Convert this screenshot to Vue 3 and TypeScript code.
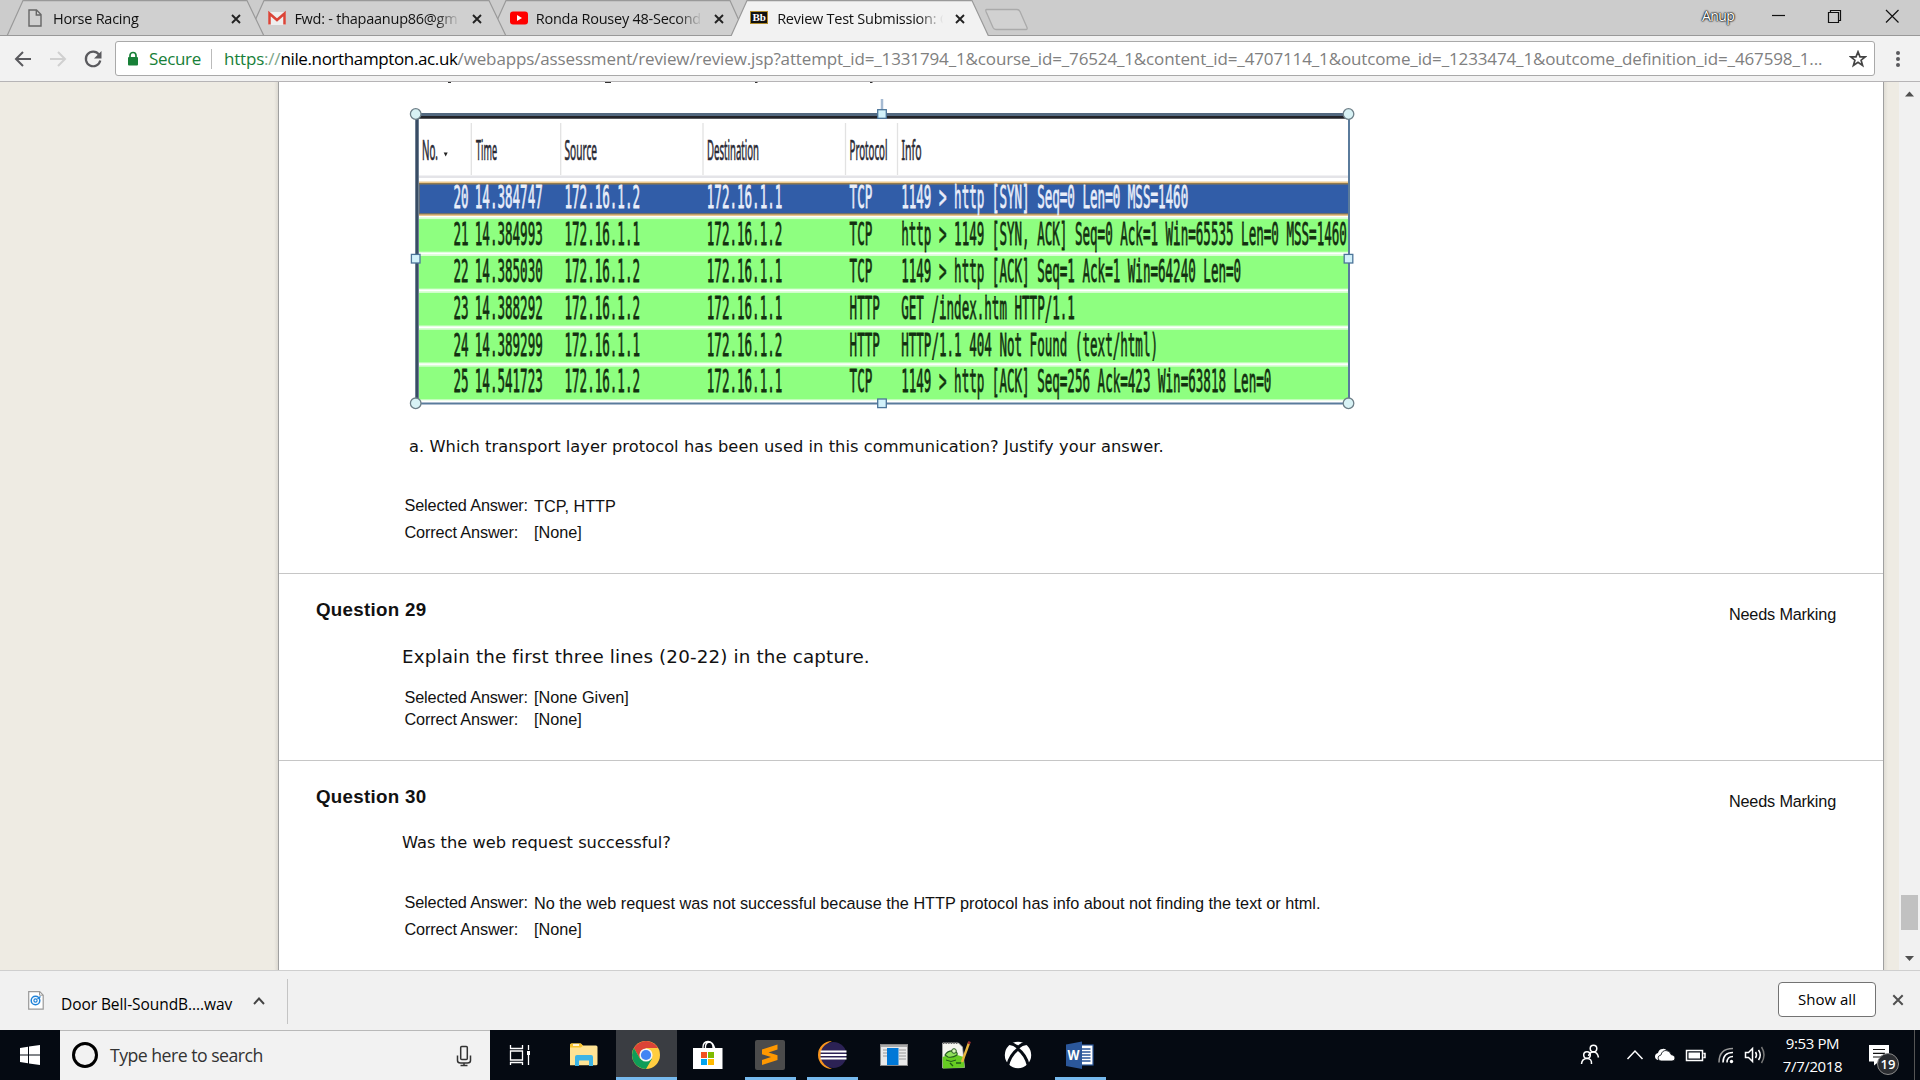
<script setup lang="ts">
interface Tab {
  id: string
  title: string
}

interface PacketRow {
  no: string
  time: string
  source: string
  destination: string
  protocol: string
  info: string
}

const tabs: Tab[] = [
  { id: 'page', title: 'Horse Racing' },
  { id: 'mail', title: 'Fwd: - thapaanup86@gm' },
  { id: 'video', title: 'Ronda Rousey 48-Second' },
  { id: 'review', title: 'Review Test Submission: C' },
]

const columns = [
  { label: 'No.', x: 422, width: 16 },
  { label: 'Time', x: 476, width: 21 },
  { label: 'Source', x: 564.5, width: 32.5 },
  { label: 'Destination', x: 707, width: 52 },
  { label: 'Protocol', x: 849.5, width: 38 },
  { label: 'Info', x: 901.5, width: 20 },
]

const packets: PacketRow[] = [
  { no: '20', time: '14.384747', source: '172.16.1.2', destination: '172.16.1.1', protocol: 'TCP', info: '1149 > http [SYN] Seq=0 Len=0 MSS=1460' },
  { no: '21', time: '14.384993', source: '172.16.1.1', destination: '172.16.1.2', protocol: 'TCP', info: 'http > 1149 [SYN, ACK] Seq=0 Ack=1 Win=65535 Len=0 MSS=1460' },
  { no: '22', time: '14.385030', source: '172.16.1.2', destination: '172.16.1.1', protocol: 'TCP', info: '1149 > http [ACK] Seq=1 Ack=1 Win=64240 Len=0' },
  { no: '23', time: '14.388292', source: '172.16.1.2', destination: '172.16.1.1', protocol: 'HTTP', info: 'GET /index.htm HTTP/1.1' },
  { no: '24', time: '14.389299', source: '172.16.1.1', destination: '172.16.1.2', protocol: 'HTTP', info: 'HTTP/1.1 404 Not Found (text/html)' },
  { no: '25', time: '14.541723', source: '172.16.1.2', destination: '172.16.1.1', protocol: 'TCP', info: '1149 > http [ACK] Seq=256 Ack=423 Win=63818 Len=0' },
]

const rowTop = (i: number): number => 181.8 + i * 36.9
const baseline = (i: number): number => 208.4 + i * 36.8

const cells = (row: PacketRow) => [
  { x: 453.5, text: row.no },
  { x: 474.8, text: row.time },
  { x: 564.5, text: row.source },
  { x: 706.8, text: row.destination },
  { x: 849.6, text: row.protocol },
  { x: 901.2, text: row.info },
]

const corners = [[415.7, 114], [1348.5, 114], [415.7, 403.3], [1348.5, 403.3]]
const sides = [[882, 114], [882, 403.3], [415.7, 258.7], [1348.5, 258.7]]
</script>

<template>
  <div class="screen">
    <header class="tabstrip">
      <svg class="tabshapes" width="1040" height="36" viewBox="0 0 1040 36">
        <g fill="#d0d0d0" stroke="#999" stroke-width="1.2">
          <path d="M490 36 L506 .6 H730 L746 36" />
          <path d="M248 36 L264 .6 H489 L506 36" />
          <path d="M7 36 L23 .6 H247 L264 36" />
        </g>
        <path d="M0 35.500H1040" stroke="#999" />
        <path d="M731 36 L747 .6 H972 L988.500 36" fill="#f2f2f2" stroke="#999" stroke-width="1.200" />
        <path d="M986.500 9.500H1017q2 0 3 2l7 16q.6 2-1 2H996q-2 0-3-2l-7-16q-.6-2 .5-2z" fill="#d1d1d1" stroke="#aaa" stroke-width="1.300" />
      </svg>
      <nav class="tabs">
        <div v-for="tab in tabs" :key="tab.id" class="tab">
          <span class="favicon">
            <svg v-if="tab.id === 'page'" width="20" height="20" viewBox="0 0 20 20">
              <path d="M3 2h7.500l4.500 4.500V18H3z M10.300 2v5h4.700" fill="none" stroke="#666" stroke-width="1.400" />
            </svg>
            <svg v-else-if="tab.id === 'mail'" width="20" height="20" viewBox="0 0 20 20">
              <path d="M1.500 4h17v13h-17z" fill="#eee" />
              <path d="M2.500 16.500V5.500L10 12l7.500-6.500v11" fill="none" stroke="#db4437" stroke-width="2.500" />
            </svg>
            <svg v-else-if="tab.id === 'video'" width="20" height="20" viewBox="0 0 20 20">
              <rect x="1" y="3.500" width="18" height="13" rx="3" fill="#f00" />
              <path d="M8 7l5 3-5 3z" fill="#fff" />
            </svg>
            <span v-else class="bb">Bb</span>
          </span>
          <span class="tab-title">{{ tab.title }}</span>
          <svg class="tab-close" width="12" height="12" viewBox="0 0 12 12">
            <path d="M2 2l8 8M10 2l-8 8" stroke="#222" stroke-width="1.900" />
          </svg>
        </div>
      </nav>
      <div class="window-controls">
        <span class="profile">Anup</span>
        <svg width="130" height="34" viewBox="0 0 130 34" fill="none" stroke="#111" stroke-width="1.200">
          <path d="M1 15.500h13" />
          <path d="M57.500 12.500h10v10h-10z M59.500 12.500v-2h10v10h-2" />
          <path d="M115 10l12.500 12.500M127.500 10L115 22.500" />
        </svg>
      </div>
    </header>

    <div class="toolbar">
      <svg class="nav-icons" width="115" height="45" viewBox="0 36 115 45" fill="none">
        <path d="M31 59H16M23 52l-7 7 7 7" stroke="#5a5a5e" stroke-width="2" />
        <path d="M50 59h15M58 52l7 7-7 7" stroke="#d0d0d0" stroke-width="2" />
        <path d="M99 54.500a7.300 7.300 0 1 0 1.300 6" stroke="#5a5a5e" stroke-width="2.200" />
        <path d="M101.500 51v7.500H94z" fill="#5a5a5e" />
      </svg>
      <div class="omnibox">
        <svg class="lock" width="12" height="16" viewBox="0 0 12 16">
          <path d="M3 7V4.500a3 3 0 0 1 6 0V7" fill="none" stroke="#188038" stroke-width="1.700" />
          <rect x="1" y="6" width="10" height="8.500" rx="1" fill="#188038" />
        </svg>
        <span class="secure">Secure</span>
        <span class="separator"></span>
        <span class="url"><span class="scheme">https</span><span class="slashes">://</span><span class="host">nile.northampton.ac.uk</span><span class="path">/webapps/assessment/review/review.jsp?attempt_id=_1331794_1&amp;course_id=_76524_1&amp;content_id=_4707114_1&amp;outcome_id=_1233474_1&amp;outcome_definition_id=_467598_1...</span></span>
        <svg class="star" width="18" height="18" viewBox="0 0 18 18">
          <path d="M9 1.800l2 5h5.200l-4.100 3.400 1.500 5.300L9 12.400l-4.600 3.100 1.500-5.300L1.800 6.800H7z" fill="none" stroke="#444" stroke-width="1.700" />
        </svg>
      </div>
      <svg class="menu" width="6" height="18" viewBox="0 0 6 18" fill="#5a5a5e">
        <circle cx="3" cy="3" r="2" /><circle cx="3" cy="9" r="2" /><circle cx="3" cy="15" r="2" />
      </svg>
    </div>

    <main class="viewport">
      <div class="gutter"></div>
      <div class="card">
        <section class="question q28">
          <svg class="capture" width="1100" height="330" viewBox="279 82 1100 330">
            <path d="M448 82.500h3M605 82.500h6M755 82.500h2.500M870 82.500h2.500" stroke="#333" />
            <rect x="416" y="114" width="932.500" height="289" fill="#fff" />
            <rect x="418" y="175.500" width="930" height="2.500" fill="#e4e4e8" />
            <path d="M471.300 123v52M560.700 123v52M703 123v52M845.500 123v52M897.500 123v52" stroke="#e2e2e2" stroke-width="1.300" />
            <g class="capture-head">
              <text v-for="c in columns" :key="c.label" :x="c.x" y="160.200" :textLength="c.width" lengthAdjust="spacingAndGlyphs">{{ c.label }}</text>
            </g>
            <path d="M443.700 152.500h4l-2 4z" fill="#222" />
            <g v-for="(row, i) in packets" :key="row.no">
              <template v-if="i === 0">
                <rect x="418" y="181.500" width="930.500" height="34.500" fill="#ecc88e" />
                <rect x="418" y="183" width="930.500" height="31.500" fill="#8f7a50" />
                <rect x="419.500" y="184.500" width="929" height="28.800" fill="#315da8" />
              </template>
              <template v-else>
                <rect x="418" :y="rowTop(i) - 1.400" width="930.500" height="35.500" fill="#d9ffd4" />
                <rect x="418" :y="rowTop(i) + .4" width="930.500" height="32.600" fill="#8eff80" />
              </template>
              <g class="capture-data" :class="{ selected: i === 0 }">
                <text v-for="cell in cells(row)" :key="cell.x" :transform="`translate(${cell.x} ${baseline(i)}) scale(.3922 1)`">{{ cell.text }}</text>
              </g>
            </g>
            <path d="M417 112v291" stroke="#6e7f92" stroke-width="4" />
            <path d="M417 114v289" stroke="#334860" stroke-width="1.800" />
            <path d="M416 114.500H1349" stroke="#52687f" stroke-width="3" />
            <path d="M418 117.300H1348" stroke="#222328" stroke-width="2.800" />
            <path d="M1349 114V403.500H416" fill="none" stroke="#5a7b9c" stroke-width="2" />
            <path d="M882 99v12" stroke="#a5bad2" stroke-width="2.500" />
            <circle v-for="p in corners" :key="`c${p}`" :cx="p[0]" :cy="p[1]" r="5.300" fill="#d8f2f5" stroke="#6d7f88" stroke-width="1.300" />
            <rect v-for="p in sides" :key="`s${p}`" :x="p[0] - 4.300" :y="p[1] - 4.300" width="8.600" height="8.600" fill="#d2f1fa" stroke="#4c7499" stroke-width="1.300" />
          </svg>
          <p class="prompt listed">a. Which transport layer protocol has been used in this communication? Justify your answer.</p>
          <div class="answer first"><span class="label">Selected Answer:</span><span class="value lowered">TCP, HTTP</span></div>
          <div class="answer spaced"><span class="label">Correct Answer:</span><span class="value">[None]</span></div>
        </section>
        <section class="question q29">
          <div class="heading"><h3>Question 29</h3><span class="status">Needs Marking</span></div>
          <p class="prompt large">Explain the first three lines (20-22) in the capture.</p>
          <div class="answer first"><span class="label">Selected Answer:</span><span class="value">[None Given]</span></div>
          <div class="answer"><span class="label">Correct Answer:</span><span class="value">[None]</span></div>
        </section>
        <section class="question q30">
          <div class="heading"><h3>Question 30</h3><span class="status">Needs Marking</span></div>
          <p class="prompt">Was the web request successful?</p>
          <div class="answer first"><span class="label">Selected Answer:</span><span class="value lowered">No the web request was not successful because the HTTP protocol has info about not finding the text or html.</span></div>
          <div class="answer spaced"><span class="label">Correct Answer:</span><span class="value">[None]</span></div>
        </section>
      </div>
      <div class="gutter-right"></div>
      <div class="scrollbar">
        <svg width="21" height="22" viewBox="0 0 21 22"><path d="M6 14.500l4.500-5 4.500 5z" fill="#505050" /></svg>
        <div class="thumb"></div>
        <svg width="21" height="22" viewBox="0 0 21 22"><path d="M6 9l4.500 5L15 9z" fill="#505050" /></svg>
      </div>
    </main>

    <div class="downloads">
      <svg class="file-icon" width="16" height="19" viewBox="0 0 16 19">
        <path d="M.700.700h11l3.500 3.500v14H.700z" fill="#fff" stroke="#999" stroke-width="1.200" />
        <path d="M11.500.700v3.500h3.500" fill="none" stroke="#999" />
        <circle cx="7.500" cy="9.500" r="4.300" fill="none" stroke="#1f82d8" stroke-width="1.500" />
        <circle cx="7.500" cy="9.500" r="1.600" fill="none" stroke="#1f82d8" stroke-width="1.200" />
        <path d="M9.500 8l3-2.500" stroke="#1f82d8" stroke-width="1.300" />
      </svg>
      <span class="filename">Door Bell-SoundB....wav</span>
      <svg class="chevron" width="14" height="10" viewBox="0 0 14 10"><path d="M2 8l5-5.500L12 8" fill="none" stroke="#444" stroke-width="1.900" /></svg>
      <span class="divider"></span>
      <button class="show-all">Show all</button>
      <svg class="close-bar" width="12" height="12" viewBox="0 0 12 12"><path d="M1.300 1.300l9.400 9.400M10.700 1.300l-9.400 9.400" stroke="#505050" stroke-width="2" /></svg>
    </div>

    <footer class="taskbar">
      <div class="start">
        <svg width="20" height="20" viewBox="0 0 20 20" fill="#fff"><path d="M0 3l8-1.200v7.700H0z M9 1.600L20 0v9.500H9z M0 10.500h8v7.700L0 17z M9 10.500h11V20L9 18.400z" /></svg>
      </div>
      <div class="search">
        <span class="cortana"></span>
        <span class="placeholder">Type here to search</span>
        <svg class="mic" width="16" height="22" viewBox="0 0 16 22" fill="none" stroke="#333" stroke-width="1.500">
          <rect x="4.700" y="1.500" width="6.600" height="13" rx="1" /><path d="M1.500 10.500v5q0 2.500 3 2.500h7q3 0 3-2.500v-5M8 18v2.500M4.500 20.500h7" />
        </svg>
      </div>
      <svg class="apps" width="626" height="50" viewBox="490 1030 626 50">
        <g stroke="#fff" stroke-width="1.300" fill="none">
          <path d="M510.500 1045v3.500h12V1045 M510.500 1051h12v9h-12z M510.500 1065v-2.500h12v2.500 M528.500 1045v5M528.500 1055v10" /><path d="M528.500 1051v4" stroke-width="3" />
        </g>
        <path d="M570 1045q0-1.500 1.500-1.500h9l2.500 2h13q1.500 0 1.500 1.500v17q0 1.300-1.500 1.300h-26z" fill="#ffe394" />
        <path d="M570 1045q0-1.500 1.500-1.500h9.500l2 2.200-2 1.800h-11z" fill="#f8c32c" /><path d="M573 1045h6" stroke="#fff" stroke-width="1.600" />
        <path d="M575 1066v-9q0-2 2-2h14q2 0 2 2v9h-4v-5.500h-10v5.500z" fill="#3cb4e6" />
        <rect x="616" y="1030" width="61" height="50" fill="#3a3d42" />
        <circle cx="646" cy="1055" r="14" fill="#ffcd40" />
        <path d="M633.900 1048A14 14 0 0 1 658.100 1048H646L639.900 1058.500z" fill="#db4437" />
        <path d="M633.900 1048A14 14 0 0 0 646 1069l6.100-10.500h-12.200z" fill="#0f9d58" />
        <circle cx="646" cy="1055" r="6.600" fill="#f5f5f5" /><circle cx="646" cy="1055" r="5.100" fill="#4285f4" />
        <path d="M703 1049v-2q0-5 5-5.500 5 .5 5 5.500v2 M705.500 1049v-3q.5-3.500 3.500-4 4 0 6 7" fill="none" stroke="#fff" stroke-width="1.300" />
        <path d="M693 1048h29.500v21H693z" fill="#fff" />
        <path d="M701 1052h6v6h-6z" fill="#f25022" /><path d="M708 1052h6v6h-6z" fill="#7fba00" /><path d="M701 1059h6v6h-6z" fill="#00a4ef" /><path d="M708 1059h6v6h-6z" fill="#ffb900" />
        <rect x="755" y="1040" width="30" height="30" rx="2" fill="#4b4b4b" />
        <path d="M762 1049.500l15.500-5v5l-9 3 9 2.700v4.800l-15.500 5v-5l9-3-9-2.700z" fill="#ff9800" />
        <path d="M832 1041a14 14 0 0 0 0 28 15 15 0 0 1 0-28z" fill="#f7941e" />
        <circle cx="833.500" cy="1055" r="13" fill="#2c2255" />
        <path d="M820.500 1051.500h26M820.500 1055h26M820.500 1058.500h26" stroke="#fff" stroke-width="1.900" />
        <rect x="880.500" y="1044.500" width="27" height="21" fill="#e9e9e9" stroke="#888" /><path d="M881 1046h26" stroke="#a8a8a8" stroke-width="2" />
        <path d="M883 1050h4M883 1053h4M883 1056h4M899 1050h7M899 1053h7M899 1056h7M899 1059h7" stroke="#999" stroke-width="1.200" /><rect x="887" y="1048" width="11.500" height="17" fill="#0078d7" />
        <path d="M942.500 1043h16l4 4 2 20.500-22 .5z" fill="#f4f4ee" stroke="#aaa" stroke-width=".8" /><path d="M942.500 1057q10-5 21 0l1 10.500-21.500 1z" fill="#66cc22" />
        <path d="M943 1043h15" stroke="#666" stroke-width="2" stroke-dasharray="1.300 1.300" />
        <path d="M945 1055q3-5 9-4 4 1 3 4-4 3-9 2z" fill="#8fe05a" stroke="#245b1e" stroke-width="1.100" /><circle cx="954" cy="1051" r="2.300" fill="#d9f5b8" stroke="#245b1e" /><path d="M946 1060q5 3 10 0" fill="none" stroke="#245b1e" />
        <path d="M950 1063l3 3M956 1063h5" stroke="#205a18" stroke-width="1.300" />
        <path d="M969 1043l-7 19" stroke="#e7b53c" stroke-width="2.400" /><path d="M969.700 1041.500l-1 2.500" stroke="#9c3131" stroke-width="2.600" />
        <circle cx="1018" cy="1055" r="13.200" fill="#fff" />
        <path d="M1008.500 1043.500q5-.5 9.500 4 4.500-4.500 9.500-4M1018 1049q-8 6-10.500 17M1018 1049q8 6 10.500 17" fill="none" stroke="#060b13" stroke-width="3" />
        <rect x="1079" y="1045" width="14" height="20" fill="#fff" stroke="#2b579a" stroke-width="1.200" />
        <path d="M1081 1049h9.500M1081 1052h9.500M1081 1055h9.500M1081 1058h9.500M1081 1061h9.500" stroke="#2b579a" stroke-width="1.300" />
        <path d="M1066 1044.500l16-3v27.500l-16-3z" fill="#2b579a" />
        <text x="1067.500" y="1060" class="word-mark" textLength="12" lengthAdjust="spacingAndGlyphs">W</text>
        <path d="M616 1078.500h61M745 1078.500h51M807 1078.500h51M1055 1078.500h51" stroke="#76b9ed" stroke-width="3" />
      </svg>
      <svg class="tray" width="200" height="50" viewBox="1575 1030 200 50" fill="none" stroke="#fff" stroke-width="1.500">
        <circle cx="1593.500" cy="1048.500" r="3.300" /><path d="M1588.500 1056q1-4 5-4t5 5.500" /><circle cx="1587" cy="1055" r="3.300" /><path d="M1581.500 1064q.5-5.500 5.500-5.500t4.500 5.500" />
        <path d="M1627.500 1059l7.500-8 7.500 8" />
        <path d="M1659 1060h-1q-3-1-3-3.500 0-3 3-3.500 1-4 4.500-4 2-1 4.500 1.500z" fill="#fff" stroke="none" /><path d="M1661 1061q-3-.5-3-3t3-3q1-4.500 5-4.500 4 0 5 4 4 .500 4 3.500 0 3-3 3z" fill="#fff" stroke="#050a12" stroke-width=".8" />
        <path d="M1686.500 1050.500h16v10h-16z M1703.500 1053.500h1.500v4h-1.500" /><path d="M1688.500 1052.500h11.500v6h-11.500z" fill="#fff" stroke="none" />
        <path d="M1719 1062.500q0-14 14-14" stroke="#999" /><path d="M1723 1062.500q0-10 10-10M1727 1062.500q0-6 6-6" /><circle cx="1731.500" cy="1061.500" r="1.700" fill="#fff" stroke="none" />
        <path d="M1745.500 1052.500h3l4-4v13l-4-4h-3z" /><path d="M1755.500 1052q2 3 0 6M1758.500 1050q3.500 5 0 10" /><path d="M1761.500 1047q5 8 0 16" stroke="#777" />
      </svg>
      <div class="clock"><span class="time">9:53 PM</span><span class="date">7/7/2018</span></div>
      <div class="notices">
        <svg width="21" height="22" viewBox="0 0 21 22"><path d="M0 0h20v16.500H10l-5 4v-4H0z" fill="#fff" /><path d="M4 4.500h12M4 8.300h12M4 12h12" stroke="#111" stroke-width="1.200" /></svg>
        <span class="badge">19</span>
      </div>
      <span class="peek"></span>
    </footer>
  </div>
</template>

<style>
body {
  margin: 0;
  overflow: hidden;
}
</style>

<style scoped>
.screen {
  width: 1920px;
  height: 1080px;
  display: flex;
  flex-direction: column;
  overflow: hidden;
  font-family: "Open Sans", "Noto Sans", sans-serif;
  color: #000;
  background: #fff;
}
svg { display: block; flex: none; }
span, p, h3 { white-space: nowrap; }

.tabstrip {
  position: relative;
  height: 36px;
  flex: none;
  display: flex;
  justify-content: space-between;
  background: #ccc;
  box-shadow: inset 0 -1px #999;
}
.tabshapes { position: absolute; left: 0; top: 0; }
.tabs { position: relative; display: flex; }
.tab {
  width: 241.4px;
  height: 36px;
  display: flex;
  align-items: center;
  box-sizing: border-box;
  padding-left: 26px;
}
.favicon { width: 20px; height: 20px; margin-right: 7px; flex: none; }
.bb {
  display: block;
  width: 16px;
  height: 11px;
  margin: 3px 0 0 0;
  border: 1.5px solid #b08a28;
  background: #111;
  color: #fff;
  font: bold 11px/10px "Liberation Serif", serif;
  text-align: center;
}
.tab-title {
  width: 168px;
  flex: none;
  font-size: 14.500px;
  line-height: 22px;
  padding-top: 1px;
  letter-spacing: -0.25px;
  color: #111;
  mask-image: linear-gradient(90deg, #000 84%, transparent 99%);
}
.tab-close { margin-left: 9px; margin-top: 2px; }
.window-controls { display: flex; width: 219px; }
.profile {
  width: 69px;
  padding-left: 1px;
  font-size: 14px;
  line-height: 32px;
  letter-spacing: -0.6px;
  color: #fff;
  text-shadow: 0 0 2px #000, 0 0 2px #000, 0 0 1px #000;
}

.toolbar {
  height: 46px;
  flex: none;
  display: flex;
  background: #f2f2f2;
  box-sizing: border-box;
  border-bottom: 1px solid #b6b4b6;
}
.omnibox {
  width: 1760px;
  height: 35px;
  margin-top: 5px;
  display: flex;
  align-items: center;
  box-sizing: border-box;
  border: 1px solid #a9a9a9;
  border-radius: 3px;
  background: #fff;
  font-size: 17px;
  line-height: 33px;
}
.lock { margin-left: 11px; }
.secure { width: 62px; flex: none; margin-left: 10px; color: #188038; letter-spacing: -0.35px; }
.separator { width: 1px; height: 20px; background: #bbb; }
.url { width: 1625px; flex: none; margin-left: 12px; }
.scheme, .slashes { color: #188038; letter-spacing: -0.2px; }
.slashes { color: #7ba588; }
.host { letter-spacing: -0.37px; }
.path { color: #808080; letter-spacing: -0.135px; }
.menu { margin: 14px 0 0 20px; }

.viewport { height: 888px; flex: none; display: flex; background: #eeebe3; overflow: hidden; }
.gutter { width: 278px; flex: none; background: linear-gradient(90deg, #eeebe3 274px, #dcd9d2); }
.card {
  width: 1604px;
  height: 888px;
  border-left: 1px solid #a0a0a0;
  border-right: 1px solid #a0a0a0;
  background: #fff;
  overflow: hidden;
  flex: none;
}
.gutter-right { width: 15px; background: linear-gradient(90deg, #e0ddd5, #eeebe3 4px); }
.scrollbar {
  width: 21px;
  display: flex;
  flex-direction: column;
  background: #f1f1f1;
}
.thumb { width: 17px; height: 35px; margin: 791px auto 17px 2px; background: #c1c1c1; }

.question { box-sizing: border-box; border-bottom: 1px solid #c6c6c6; color: #111; }
.q28 { height: 492px; }
.q29 { height: 187px; padding-top: 24px; }
.q30 { height: 220px; padding-top: 24px; border-bottom: 0; }
.capture-head text { font: 27.500px "Noto Sans", sans-serif; fill: #2a2a34; stroke: #2a2a34; stroke-width: .7; }
.capture-data text { font: 32px "DejaVu Sans Mono", monospace; fill: #12300f; stroke: #12300f; stroke-width: .8; }
.capture-data.selected text { fill: #e9eefa; stroke: #e9eefa; }
.prompt {
  margin: 22px 0 0 123px;
  font: 16.250px/24px "DejaVu Sans", Verdana, sans-serif;
}
.prompt.listed { margin: 23px 0 0 130px; letter-spacing: 0.05px; }
.prompt.large { margin-top: 22.500px; font-size: 18.300px; letter-spacing: 0.15px; }
.answer {
  display: flex;
  height: 22px;
  margin-left: 125.500px;
  font: 16.250px/22px "Liberation Sans", Arial, sans-serif;
}
.q28 .first { margin-top: 35.400px; }
.q29 .first { margin-top: 17.500px; }
.q30 .first { margin-top: 36px; }
.spaced { margin-top: 5px; }
.label { width: 129.500px; flex: none; letter-spacing: -0.13px; }
.lowered { padding-top: 1px; }
.heading {
  display: flex;
  justify-content: space-between;
  height: 24px;
  padding: 0 47px 0 37px;
}
h3 { margin: 0; font: bold 18.750px/24px "Liberation Sans", Arial, sans-serif; letter-spacing: 0.28px; }
.status { font: 16.250px/24px "Liberation Sans", Arial, sans-serif; padding-top: 3.500px; letter-spacing: -0.17px; }

.downloads {
  height: 60px;
  flex: none;
  display: flex;
  box-sizing: border-box;
  border-top: 1px solid #cfcfcf;
  background: #f1f1f1;
}
.file-icon { margin: 20px 0 0 28px; }
.filename { width: 173px; margin-left: 17px; font-size: 15.500px; line-height: 26px; padding-top: 20px; letter-spacing: -0.07px; }
.chevron { margin: 25px 0 0 18px; }
.divider { width: 1px; height: 45px; margin: 8px 0 0 21px; background: #c4c4c4; }
.show-all {
  width: 98px;
  height: 35px;
  margin: 11px 0 0 auto;
  padding: 0 0 2px;
  border: 1.500px solid #737373;
  border-radius: 4px;
  background: #fff;
  color: #000;
  font: 500 15px/30px "Open Sans", sans-serif;
}
.close-bar { margin: 23px 16px 0 16px; }

.taskbar { height: 50px; flex: none; display: flex; background: #050a12; color: #fff; }
.start { width: 60px; flex: none; }
.start svg { margin: 15px 0 0 20px; }
.search {
  width: 430px;
  flex: none;
  display: flex;
  align-items: center;
  box-sizing: border-box;
  border-top: 1px solid #b9b9b9;
  background: #f2f2f2;
}
.cortana { width: 20px; height: 20px; flex: none; margin: 0 0 1px 12px; border: 3.500px solid #000; border-radius: 50%; }
.placeholder { width: 346px; flex: none; margin-left: 12px; padding-bottom: 1px; color: #333; font-size: 17.700px; line-height: 40px; letter-spacing: -0.53px; }
.word-mark { font: bold 14px "Open Sans", sans-serif; fill: #fff; }
.tray { margin-left: 459px; }
.clock { width: 75px; display: flex; flex-direction: column; align-items: center; font-size: 15px; line-height: 23px; padding: 2px 0 0 0; }
.clock span { letter-spacing: -0.4px; }
.notices { position: relative; margin: 15px 0 0 19px; width: 45px; }
.badge {
  position: absolute;
  left: 8px;
  top: 8px;
  width: 20px;
  height: 20px;
  border: 1px solid #8a8a8a;
  border-radius: 50%;
  background: #2b2d31;
  font: 600 13px/20px "Open Sans", sans-serif;
  text-align: center;
}
.peek { width: 1px; height: 50px; background: #555; }
</style>
